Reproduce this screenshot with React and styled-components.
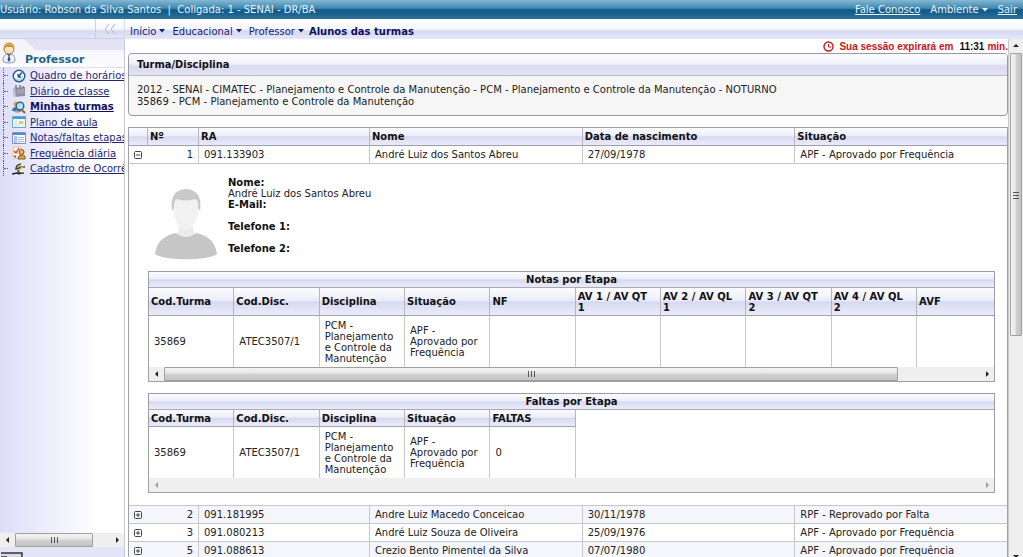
import React from 'react'
import styled, { createGlobalStyle } from 'styled-components'

const GlobalStyle = createGlobalStyle`
    * {
        box-sizing: border-box;
    }
    body {
        margin: 0;
        background: #fff;
        color: #222;
        font-family: "DejaVu Sans", Verdana, sans-serif;
        font-size: 10px;
        line-height: 11px;
        overflow: hidden;
    }
    button {
        font: inherit;
        color: inherit;
        background: none;
        border: 0;
        padding: 0;
        cursor: pointer;
    }
    svg {
        display: block;
        flex: none;
    }
`

const Page = styled.div`
    display: flex;
    flex-direction: column;
    height: 100vh;
    overflow: hidden;
`

const TopBar = styled.header`
    display: flex;
    flex: none;
    justify-content: space-between;
    align-items: center;
    height: 19px;
    padding-right: 6px;
    color: #e6f3fa;
    background: linear-gradient(#84b8d4 0, #6aa6c6 3px, #4389b0 8px, #0f5a88 10px, #1b6390 14px, #2f7299 19px);
    white-space: pre;
`

const TopLinks = styled.nav`
    display: flex;
    gap: 10px;
    a {
        color: inherit;
    }
`

const MenuButton = styled.button`
    display: inline-flex;
    align-items: center;
    gap: 3px;
    white-space: nowrap;
`

const NavBar = styled.div`
    display: flex;
    flex: none;
    height: 20px;
    background: linear-gradient(#fff 0, #f7f7fd 10px, #d3dbf4 12px, #dde0f6 16px, #e6e6f6 20px);
`

const Collapse = styled.div`
    display: flex;
    flex: none;
    justify-content: flex-end;
    width: 125px;
    border-bottom: 1px solid #d0d0dc;
    border-right: 1px solid #d8d8e4;
    button {
        display: flex;
        align-items: center;
        justify-content: center;
        width: 29px;
        border-left: 1px solid #cfcfdc;
    }
`

const Breadcrumb = styled.nav`
    display: flex;
    align-items: center;
    gap: 7px;
    padding: 4px 0 0 5px;
    color: #1c1c70;
    b {
        margin-left: -2px;
        color: #10105c;
    }
`

const Body = styled.div`
    display: flex;
    flex: 1;
    min-height: 0;
`

const Sidebar = styled.aside`
    display: flex;
    flex: none;
    flex-direction: column;
    width: 125px;
    border-right: 1px solid #c9c9d6;
    background: linear-gradient(90deg, #dedefa, #fff 80%);
    overflow: hidden;
`

const SideTitle = styled.h2`
    display: flex;
    align-items: flex-end;
    gap: 8px;
    height: 29px;
    margin: 0;
    padding: 0 0 1px 1px;
    border-bottom: 1px solid #dedeea;
    background:
        linear-gradient(#f4f4fc, #f4f4fc) 0 0 / 24px 11px no-repeat,
        linear-gradient(45deg, #f4f4fc 50%, #e3e3f5 50%) 24px 0 / 11px 11px no-repeat,
        linear-gradient(#e3e3f5 0, #e3e3f5 11px, #f4f4fc 11px, #fdfdff 28px);
    color: #1f6482;
    font-size: 11px;
    line-height: 13px;
    svg {
        align-self: flex-start;
        margin-top: 3px;
    }
`

const SideList = styled.ul`
    flex: 1;
    list-style: none;
    margin: 0;
    padding: 0 0 0 3px;
    li {
        display: flex;
        align-items: center;
        gap: 4px;
        height: 15px;
        border-left: 1px dotted #555;
        white-space: nowrap;
    }
    li:nth-child(even) {
        height: 16px;
    }
    li::before {
        content: "";
        flex: none;
        width: 4px;
        border-top: 1px dotted #555;
    }
    a {
        color: #26266e;
        text-underline-offset: 1px;
    }
    a[aria-current] {
        font-weight: bold;
        color: #10105c;
    }
`

const SideFooter = styled.div`
    display: flex;
    flex: none;
    height: 10px;
    padding: 5px 0 0 1px;
    background: #e5e5f8;
    overflow: hidden;
`

const Content = styled.main`
    flex: 1;
    min-width: 0;
    padding-left: 3px;
    overflow: hidden;
`

const Session = styled.div`
    display: flex;
    justify-content: flex-end;
    align-items: center;
    height: 14px;
    color: #c4161c;
    font: bold 10px/13px "Liberation Sans", Arial, sans-serif;
    svg {
        margin-right: 5px;
    }
    b {
        margin: 0 3px 0 6px;
        color: #111;
    }
`

const Card = styled.section`
    margin-bottom: 11px;
    border: 1px solid #9a9a9e;
    border-radius: 4px;
    background: #f6f6f6;
    overflow: hidden;
    h1 {
        margin: 0;
        padding: 4px 8px 3px;
        border-bottom: 1px solid #b9b9cc;
        background: linear-gradient(#fbfbff 0, #f0f0fa 10px, #d9d9ee 12px, #e3e3f2 21px);
        color: #111;
        font: bold 11px/14px "DejaVu Sans Condensed", Tahoma, sans-serif;
    }
    p {
        margin: 0;
        padding: 8px 8px 7px;
        line-height: 12px;
    }
`

const headFill = 'linear-gradient(#fbfbff, #eeeefa 45%, #d6d9f1 52%, #e6e6f6 85%, #eaeaf7)'

const StudentTable = styled.table`
    width: 100%;
    border-collapse: separate;
    border-spacing: 0;
    border: 1px solid #a0a0a8;
    table-layout: fixed;
`

const StudentHead = styled.th`
    width: ${props => props.$width || 'auto'};
    height: 18px;
    padding: 0 2px;
    border-bottom: 1px solid #9d9db4;
    border-left: ${props => props.$first ? 0 : '1px solid #b4b4bc'};
    background: ${headFill};
    color: #111;
    text-align: left;
`

const StudentCell = styled.td`
    height: 18px;
    padding: 0 5px;
    border-bottom: 1px solid #c6c6cc;
    border-left: ${props => props.$open ? 0 : '1px solid #c6c6cc'};
    background: ${props => props.$shaded ? '#f5f5fc' : '#fff'};
    text-align: ${props => props.$align || 'left'};
`

const Toggle = styled.button`
    display: block;
`

const DetailCell = styled.td`
    padding: 13px 12px 12px 19px;
    border-bottom: 1px solid #c6c6cc;
`

const Profile = styled.div`
    display: flex;
    align-items: flex-end;
    gap: 10px;
    height: 83px;
    padding-left: 6px;
    dl {
        align-self: flex-start;
        margin: 0;
    }
    dt {
        color: #111;
        font-weight: bold;
    }
    dd {
        min-height: 11px;
        margin: 0;
    }
`

const Grid = styled.section`
    margin-top: 11px;
    border: 1px solid #9d9da6;
    overflow: hidden;
    h3 {
        height: 16px;
        margin: 0;
        border-bottom: 1px solid #a9a9b8;
        background: ${headFill};
        color: #111;
        font-size: 10px;
        line-height: 15px;
        text-align: center;
    }
`

const GridTable = styled.table`
    width: ${props => props.$width};
    table-layout: fixed;
    border-collapse: separate;
    border-spacing: 0;
    th {
        height: ${props => props.$headHeight};
        padding: 0 8px 0 2px;
        border-right: 1px solid #b4b4bc;
        border-bottom: 1px solid #a3a3b8;
        background: ${headFill};
        color: #111;
        text-align: left;
    }
    td {
        height: 51px;
        padding: 0 5px;
        border-right: 1px solid #c6c6cc;
    }
`

const Bar = styled.div`
    display: flex;
    flex: none;
    flex-direction: ${props => props.$vertical ? 'column' : 'row'};
    ${props => props.$vertical
        ? 'width: 15px; margin-bottom: -7px; border-left: 1px solid #c8c8c8;'
        : 'height: 14px;'}
    background: #efefef;
    color: ${props => props.$disabled ? '#999' : '#222'};
    button {
        display: flex;
        flex: none;
        align-items: center;
        justify-content: center;
        width: ${props => props.$vertical ? '14px' : '15px'};
        height: 14px;
    }
`

const Track = styled.div`
    display: flex;
    flex: 1;
    flex-direction: inherit;
    padding: ${props => props.$vertical ? '0 1px' : 0};
`

const Thumb = styled.div`
    display: flex;
    align-items: center;
    justify-content: center;
    flex: 0 0 ${props => props.$size};
    border: 1px solid #a0a0a0;
    border-radius: 1px;
    background: linear-gradient(${props => props.$vertical ? '90deg' : '180deg'}, #f5f5f5, #e4e4e4 45%, #cfcfcf 52%, #c4c4c4);
    color: #555;
    svg {
        transform: ${props => props.$vertical ? 'rotate(90deg)' : 'none'};
    }
`

const arrows = {
    left: 'M4 0L1 3l3 3z',
    right: 'M2 0l3 3-3 3z',
    up: 'M0 4l3-3 3 3z',
    down: 'M0 1l3 3 3-3z',
}

function Arrow({ dir }) {
    return (
        <svg width="6" height="6" viewBox="0 0 6 6" fill="currentColor">
            <path d={arrows[dir]} />
        </svg>
    )
}

function Scroll({ vertical, size, disabled }) {
    return (
        <Bar $vertical={vertical} $disabled={disabled}>
            <button aria-label="Voltar" disabled={disabled}><Arrow dir={vertical ? 'up' : 'left'} /></button>
            <Track $vertical={vertical}>
                {size && (
                    <Thumb $vertical={vertical} $size={size}>
                        <svg width="8" height="6" viewBox="0 0 8 6" stroke="currentColor">
                            <path d="M1.500 0v6M4.500 0v6M7.500 0v6" />
                        </svg>
                    </Thumb>
                )}
            </Track>
            <button aria-label="Avançar" disabled={disabled}><Arrow dir={vertical ? 'down' : 'right'} /></button>
        </Bar>
    )
}

function Caret() {
    return (
        <svg width="6" height="4" viewBox="0 0 6 4" fill="currentColor">
            <path d="M0 0h6L3 3.500z" />
        </svg>
    )
}

function PersonIcon() {
    return (
        <svg width="16" height="22" viewBox="0 0 16 22">
            <path d="M2 19q0-6 4-7h4q4 1 4 7-1 2-6 2t-6-2z" fill="#eef2fb" stroke="#8c96b8" />
            <path d="M6 12h4l-1.500 2 1 4L8 20l-1.500-2 1-4z" fill="#3a5688" />
            <circle cx="8" cy="7" r="5" fill="#f6e3c0" stroke="#b27a2c" />
            <path d="M3 7q-1-6 5-6.500Q14 1 13 7q-2-3-5-2-3-1-5 2z" fill="#c98a34" />
            <path d="M4 3.500Q8 0 12 4" stroke="#f7c35c" fill="none" />
        </svg>
    )
}

function ClockIcon() {
    return (
        <svg width="14" height="14" viewBox="0 0 14 14">
            <circle cx="7" cy="7" r="5.800" fill="#e9f5fb" stroke="#2b5b80" strokeWidth="1.400" />
            <path d="M3 9a4.500 4.500 0 0 0 8-1" fill="none" stroke="#9fcce4" />
            <path d="M10 3.500L6.500 7.500M6 5l.5 3H9" stroke="#235a86" strokeWidth="1.500" fill="none" />
        </svg>
    )
}

function DiaryIcon() {
    return (
        <svg width="14" height="14" viewBox="0 0 14 14">
            <path d="M1 4l12-1v9L2 13z" fill="#9292a2" />
            <path d="M1 4l2-1 1 10H2z" fill="#c4c4d0" />
            <path d="M4 1v4M8 1v4M11 2v2" stroke="#777788" strokeWidth="1.500" />
            <path d="M5 7l7-1M5 9l7-1" stroke="#b1b1bf" />
        </svg>
    )
}

function ClassIcon() {
    return (
        <svg width="14" height="14" viewBox="0 0 14 14">
            <circle cx="4" cy="4" r="2.500" fill="#e2a13c" />
            <path d="M0 11q0-4 4-4t5 5z" fill="#3f78b4" />
            <path d="M9 9l4 4" stroke="#a75d21" strokeWidth="2" />
            <circle cx="8" cy="6" r="3.800" fill="#b9e0f4" stroke="#2b6595" strokeWidth="1.400" />
            <path d="M2 12l3-2 3 3z" fill="#d89445" />
        </svg>
    )
}

function PlanIcon() {
    return (
        <svg width="14" height="14" viewBox="0 0 14 14">
            <path d="M.5 1.500h13v11H.5z" fill="#edf7fd" stroke="#6aa7cc" />
            <path d="M1 2h12v2H1z" fill="#4c9bd0" />
            <path d="M3 6h2M3 8h2M3 10h2M6 10h2" stroke="#b4d7ea" />
            <path d="M7 6h4v3H7z" fill="#eec64b" />
        </svg>
    )
}

function GradesIcon() {
    return (
        <svg width="14" height="14" viewBox="0 0 14 14">
            <path d="M.5 1.500h13v11H.5z" fill="#f8fafe" stroke="#7992c3" />
            <path d="M1 2h12v2H1z" fill="#5c85ca" />
            <path d="M2 5h3v7H2z" fill="#a9c5ed" />
            <path d="M6 6.500h6M6 8.500h6M6 10.500h6" stroke="#a8b7d2" />
        </svg>
    )
}

function FrequencyIcon() {
    return (
        <svg width="14" height="14" viewBox="0 0 14 14">
            <path d="M1 1h8v11H1z" fill="#faf2de" stroke="#dfc991" />
            <path d="M2 5l2 2 3-5" stroke="#c83c2b" fill="none" strokeWidth="1.300" />
            <path d="M2 10l2 1" stroke="#c83c2b" strokeWidth="1.500" />
            <circle cx="9.500" cy="6" r="2.500" fill="#e8b469" stroke="#85511d" />
            <path d="M6 13q0-4 4-4t3 4z" fill="#d9a63d" stroke="#8a5929" />
        </svg>
    )
}

function OccurrenceIcon() {
    return (
        <svg width="14" height="14" viewBox="0 0 14 14" fill="none">
            <path d="M9 2Q4 3 4 7l4-1M13 5Q6 4 6 8t6 3" stroke="#3c4a22" strokeWidth="1.600" />
            <path d="M0 12l5-1 3 1" stroke="#222" strokeWidth="1.600" />
            <path d="M7 8l4-4" stroke="#c7b83b" strokeWidth="1.600" />
        </svg>
    )
}

function Avatar() {
    return (
        <svg width="64" height="73" viewBox="0 0 64 73">
            <path d="M1 67C3 55 8 50 21 46q11 5 22 0c13 4 18 9 20 21-9 7-53 7-62 0z" fill="#c6c6c6" />
            <path d="M25 36h14v8l3 2q-10 8-20 0l3-2z" fill="#ebebeb" />
            <path d="M19 14q13-10 26 0l-1 12q-3 16-12 17-9-1-12-17z" fill="#f1f1f1" />
            <path d="M18 24Q15 3 32 2q17 1 14 22l-2-3q1-8-3-9-9 3-18 0-4 2-3 9z" fill="#c9c9c9" />
        </svg>
    )
}

function ToggleIcon({ open }) {
    return (
        <svg width="9" height="9" viewBox="0 0 9 9" fill="none" stroke="#444">
            <rect x=".5" y="1.500" width="7" height="7" rx="1" />
            <path d={open ? 'M2 5h4' : 'M2 5h4M4 3v4'} />
        </svg>
    )
}

const menu = [
    { label: 'Quadro de horários', Icon: ClockIcon },
    { label: 'Diário de classe', Icon: DiaryIcon },
    { label: 'Minhas turmas', Icon: ClassIcon, current: true },
    { label: 'Plano de aula', Icon: PlanIcon },
    { label: 'Notas/faltas etapas', Icon: GradesIcon },
    { label: 'Frequência diária', Icon: FrequencyIcon },
    { label: 'Cadastro de Ocorrências', Icon: OccurrenceIcon },
]

const students = [
    { n: 1, ra: '091.133903', name: 'André Luiz dos Santos Abreu', birth: '27/09/1978', status: 'APF - Aprovado por Frequência', open: true },
    { n: 2, ra: '091.181995', name: 'Andre Luiz Macedo Conceicao', birth: '30/11/1978', status: 'RPF - Reprovado por Falta' },
    { n: 3, ra: '091.080213', name: 'André Luiz Souza de Oliveira', birth: '25/09/1976', status: 'APF - Aprovado por Frequência' },
    { n: 5, ra: '091.088613', name: 'Crezio Bento Pimentel da Silva', birth: '07/07/1980', status: 'APF - Aprovado por Frequência' },
]

const baseColumns = ['Cod.Turma', 'Cod.Disc.', 'Disciplina', 'Situação']
const baseValues = ['35869', 'ATEC3507/1', 'PCM - Planejamento e Controle da Manutenção', 'APF - Aprovado por Frequência']

function StageGrid({ title, columns, values, width, headHeight, thumb }) {
    return (
        <Grid>
            <h3>{title}</h3>
            <GridTable $width={width} $headHeight={headHeight}>
                <thead>
                    <tr>{columns.map(c => <th key={c}>{c}</th>)}</tr>
                </thead>
                <tbody>
                    <tr>{columns.map((c, i) => <td key={c}>{values[i]}</td>)}</tr>
                </tbody>
            </GridTable>
            <Scroll size={thumb} disabled={!thumb} />
        </Grid>
    )
}

function Detail({ student }) {
    return (
        <tr>
            <DetailCell colSpan={6}>
                <Profile>
                    <Avatar />
                    <dl>
                        <dt>Nome:</dt>
                        <dd>{student.name}</dd>
                        <dt>E-Mail:</dt>
                        <dd></dd>
                        <dt>Telefone 1:</dt>
                        <dd></dd>
                        <dt>Telefone 2:</dt>
                    </dl>
                </Profile>
                <StageGrid
                    title="Notas por Etapa"
                    columns={[...baseColumns, 'NF', 'AV 1 / AV QT 1', 'AV 2 / AV QL 1', 'AV 3 / AV QT 2', 'AV 4 / AV QL 2', 'AVF']}
                    values={baseValues}
                    width="101%"
                    headHeight="28px"
                    thumb="90%"
                />
                <StageGrid
                    title="Faltas por Etapa"
                    columns={[...baseColumns, 'FALTAS']}
                    values={[...baseValues, '0']}
                    width="50.5%"
                    headHeight="17px"
                />
            </DetailCell>
        </tr>
    )
}

function StudentRow({ student, shaded }) {
    return (
        <>
            <tr>
                <StudentCell $open $shaded={shaded}>
                    <Toggle aria-label={student.open ? 'Recolher' : 'Expandir'}><ToggleIcon open={student.open} /></Toggle>
                </StudentCell>
                <StudentCell $open $shaded={shaded} $align="right">{student.n}</StudentCell>
                <StudentCell $shaded={shaded}>{student.ra}</StudentCell>
                <StudentCell $shaded={shaded}>{student.name}</StudentCell>
                <StudentCell $shaded={shaded}>{student.birth}</StudentCell>
                <StudentCell $shaded={shaded}>{student.status}</StudentCell>
            </tr>
            {student.open && <Detail student={student} />}
        </>
    )
}

function App() {
    return (
        <Page>
            <GlobalStyle />
            <TopBar>
                <span>{'Usuário: Robson da Silva Santos  |  Coligada: 1 - SENAI - DR/BA'}</span>
                <TopLinks>
                    <a href="#contato">Fale Conosco</a>
                    <MenuButton>Ambiente <Caret /></MenuButton>
                    <a href="#sair">Sair</a>
                </TopLinks>
            </TopBar>
            <NavBar>
                <Collapse>
                    <button aria-label="Ocultar menu">
                        <svg width="12" height="10" viewBox="0 0 12 10" fill="none" stroke="#b4b4c6">
                            <path d="M5 0L1 5l4 5M11 0L7 5l4 5" />
                        </svg>
                    </button>
                </Collapse>
                <Breadcrumb>
                    <MenuButton>Início <Caret /></MenuButton>
                    <MenuButton>Educacional <Caret /></MenuButton>
                    <MenuButton>Professor <Caret /></MenuButton>
                    <b>Alunos das turmas</b>
                </Breadcrumb>
            </NavBar>
            <Body>
                <Sidebar>
                    <SideTitle><PersonIcon />Professor</SideTitle>
                    <SideList>
                        {menu.map(({ label, Icon, current }) => (
                            <li key={label}>
                                <Icon />
                                <a href="#menu" aria-current={current ? 'page' : undefined}>{label}</a>
                            </li>
                        ))}
                    </SideList>
                    <Scroll size="83%" />
                    <SideFooter>
                        <svg width="22" height="6" viewBox="0 0 22 6">
                            <path d="M0 1h22v5H0z" fill="#d9d9e2" />
                            <path d="M0 1h21v4M0 5h6" stroke="#333" fill="none" strokeWidth="1.500" />
                        </svg>
                    </SideFooter>
                </Sidebar>
                <Content>
                    <Session>
                        <svg width="11" height="11" viewBox="0 0 11 11" fill="none" stroke="currentColor">
                            <circle cx="5.500" cy="5.500" r="4.500" strokeWidth="1.400" />
                            <path d="M5.500 3v3H8" />
                        </svg>
                        Sua sessão expirará em <b>11:31</b> min.
                    </Session>
                    <Card>
                        <h1>Turma/Disciplina</h1>
                        <p>
                            2012 - SENAI - CIMATEC - Planejamento e Controle da Manutenção - PCM - Planejamento e Controle da Manutenção - NOTURNO<br />
                            35869 - PCM - Planejamento e Controle da Manutenção
                        </p>
                    </Card>
                    <StudentTable>
                        <thead>
                            <tr>
                                <StudentHead $first $width="18px" aria-label="Detalhes" />
                                <StudentHead $width="51px">Nº</StudentHead>
                                <StudentHead $width="171px">RA</StudentHead>
                                <StudentHead>Nome</StudentHead>
                                <StudentHead>Data de nascimento</StudentHead>
                                <StudentHead>Situação</StudentHead>
                            </tr>
                        </thead>
                        <tbody>
                            {students.map((s, i) => <StudentRow key={s.n} student={s} shaded={i % 2 === 1} />)}
                        </tbody>
                    </StudentTable>
                </Content>
                <Scroll vertical size="57%" />
            </Body>
        </Page>
    )
}

export default App
